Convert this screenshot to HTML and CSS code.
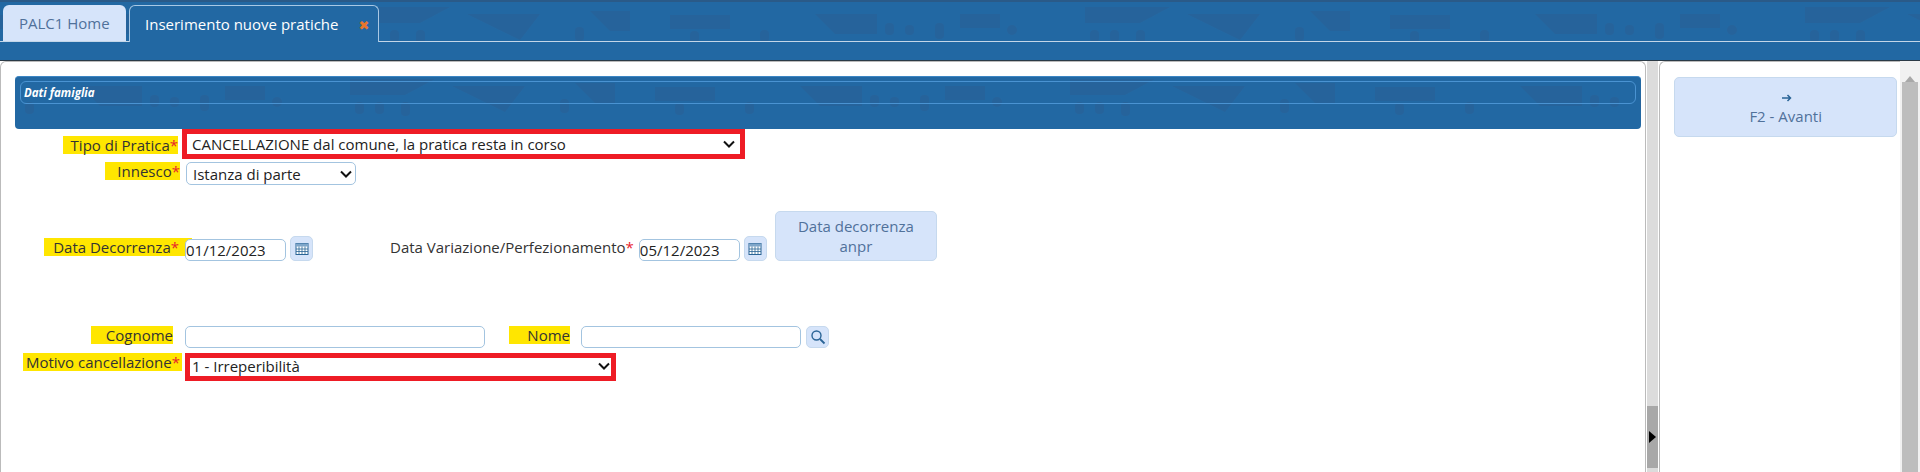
FILE: index.html
```html
<!DOCTYPE html>
<html lang="it">
  <head>
    <meta charset="UTF-8" />
    <title>Inserimento nuove pratiche</title>
    <link rel="stylesheet" href="styles.css">
  </head>
  <body>
    <div class="topbar">
      <ul class="tabs">
        <li class="tab">PALC1 Home</li>
        <li class="tab active">Inserimento nuove pratiche <span class="tab-close">&#10006;</span></li>
      </ul>
    </div>
    <div class="main">
      <div class="panel">
        <div class="fieldset-head">
          <div class="legend">Dati famiglia</div>
        </div>
        <div class="row row-tipo">
          <label class="lbl hl hl-tipo">Tipo di Pratica<em>*</em></label>
          <div class="red-box red-tipo">
            <span>CANCELLAZIONE dal comune, la pratica resta in corso</span>
            <svg class="chev" viewBox="0 0 12 8"><path d="M1 1.5l5 5 5-5" /></svg>
          </div>
        </div>
        <div class="row row-innesco">
          <label class="lbl hl hl-innesco">Innesco<em>*</em></label>
          <div class="select-box">
            <span>Istanza di parte</span>
            <svg class="chev" viewBox="0 0 12 8"><path d="M1 1.5l5 5 5-5" /></svg>
          </div>
        </div>
        <div class="row row-date">
          <label class="lbl hl hl-data">Data Decorrenza<em>*</em></label>
          <input class="inp inp-date inp-first" type="text" value="01/12/2023" />
          <button class="icon-btn cal">
            <svg viewBox="0 0 14 14"><rect x="1" y="1.5" width="12" height="11" fill="#fff" stroke="#2a6496"/><rect x="1" y="1.5" width="12" height="3" fill="#7fa6c9"/><path d="M1 7h12M1 9.5h12M4 4.5v8M7 4.5v8M10 4.5v8" stroke="#2a6496" stroke-width=".8"/></svg>
          </button>
          <label class="lbl lbl-var">Data Variazione/Perfezionamento<em>*</em></label>
          <input class="inp inp-date" type="text" value="05/12/2023" />
          <button class="icon-btn cal">
            <svg viewBox="0 0 14 14"><rect x="1" y="1.5" width="12" height="11" fill="#fff" stroke="#2a6496"/><rect x="1" y="1.5" width="12" height="3" fill="#7fa6c9"/><path d="M1 7h12M1 9.5h12M4 4.5v8M7 4.5v8M10 4.5v8" stroke="#2a6496" stroke-width=".8"/></svg>
          </button>
          <button class="btn-anpr">Data decorrenza anpr</button>
        </div>
        <div class="row row-nome">
          <label class="lbl hl hl-cognome">Cognome</label>
          <input class="inp inp-cognome" type="text" />
          <label class="lbl hl hl-nome">Nome</label>
          <input class="inp inp-nome" type="text" />
          <button class="icon-btn search">
            <svg viewBox="0 0 16 16"><circle cx="6.5" cy="6.5" r="4.5" fill="none" stroke="#2a6496" stroke-width="1.4"/><path d="M10 10l4.5 4.5" stroke="#2a6496" stroke-width="1.8"/></svg>
          </button>
        </div>
        <div class="row row-motivo">
          <label class="lbl hl hl-motivo">Motivo cancellazione<em>*</em></label>
          <div class="red-box red-motivo">
            <span>1 - Irreperibilità</span>
            <svg class="chev" viewBox="0 0 12 8"><path d="M1 1.5l5 5 5-5" /></svg>
          </div>
        </div>
      </div>
      <div class="splitter">
        <div class="splitter-thumb"><i></i></div>
      </div>
      <div class="side">
        <button class="btn-avanti">
          <svg class="arrow" viewBox="0 0 10 8"><path d="M0 4h8.5M5.5 1l3 3-3 3" /></svg>
          <span>F2 - Avanti</span>
        </button>
      </div>
      <div class="scrollbar">
        <div class="scroll-up"></div>
        <div class="scroll-thumb"></div>
      </div>
    </div>
  </body>
</html>
```

FILE: styles.css
```css
* {
  margin: 0;
  padding: 0;
  box-sizing: border-box;
}
html,
body {
  height: 472px;
  overflow: hidden;
}
body {
  font-family: "Open Sans", "Noto Sans", sans-serif;
  font-size: 15px;
  color: #333;
  background-color: #fff;
}
.topbar {
  height: 61px;
  background-color: #2268a3;
  border-top: 2px solid #2a5a88;
  border-bottom: 1px solid #2b3a46;
  padding-top: 3px;
}
/* sfondo con le casette, appena piu scure del blu */
.tabs,
.fieldset-head {
  background-image: url("data:image/svg+xml,%3Csvg xmlns='http://www.w3.org/2000/svg' width='720' height='53'%3E%3Cg fill='%2326639b'%3E%3Cpath d='M65 9h62v20H85zM210 9h40v14h-40zM335 2h85l-30 16h-55zM437 9h73l-20 26zM560 6h40v20h-20zM640 10h60v14h-60z'/%3E%3Crect x='10' y='25' width='9' height='12' rx='4'/%3E%3Crect x='135' y='18' width='9' height='12' rx='4'/%3E%3Crect x='155' y='20' width='9' height='10' rx='4'/%3E%3Crect x='185' y='18' width='9' height='16' rx='4'/%3E%3Ccircle cx='262' cy='25' r='5'/%3E%3Crect x='340' y='25' width='9' height='12' rx='4'/%3E%3Crect x='360' y='25' width='9' height='12' rx='4'/%3E%3Crect x='386' y='25' width='9' height='14' rx='4'/%3E%3Crect x='545' y='22' width='9' height='14' rx='4'/%3E%3Crect x='660' y='26' width='9' height='12' rx='4'/%3E%3C/g%3E%3C/svg%3E");
}
.tabs {
  display: flex;
  height: 37px;
  padding-left: 3px;
  gap: 3px;
  list-style: none;
  border-bottom: 1px solid #c3d6e8;
  background-position: 30px 0;
}
.tab {
  height: 36px;
  padding: 0 16px;
  line-height: 36px;
  color: #50719a;
  background-color: #d6e4fa;
  border-radius: 6px 6px 0 0;
  white-space: nowrap;
}
.tab:first-child {
  width: 123px;
}
.tab.active {
  width: 250px;
  height: 37px;
  color: #fff;
  background-color: #2268a3;
  border: 1px solid #a9c8e4;
  border-bottom: none;
  padding: 0 0 0 15px;
}
.tab-close {
  margin-left: 16px;
  color: #e8762c;
  font-size: 13px;
  font-family: "DejaVu Sans", sans-serif;
}
.main {
  display: flex;
  height: 411px;
}
.panel {
  width: 1647px;
  border: 1px solid #bbb;
  border-bottom: none;
  border-radius: 6px 6px 0 0;
  padding: 14px 4px 0 14px;
}
.fieldset-head {
  width: 1626px;
  height: 53px;
  padding: 4px 5px 5px;
  background-color: #2268a3;
  border-radius: 4px;
  border-top: 1px solid #3c86c4;
}
.legend {
  height: 23px;
  line-height: 21px;
  padding-left: 3px;
  color: #fff;
  font-size: 11.5px;
  font-weight: 700;
  font-style: italic;
  border: 1px solid #4a93d2;
  border-radius: 6px;
}
.row {
  display: flex;
  align-items: flex-start;
}
.row-tipo {
  height: 33px;
}
.row-innesco {
  height: 49px;
}
.row-date {
  height: 115px;
}
.row-nome {
  height: 27px;
}
.lbl {
  line-height: 18px;
  white-space: nowrap;
}
.lbl em {
  color: #e8212d;
  font-style: normal;
}
.hl {
  background-color: #ffe600;
  text-align: right;
}
.hl-tipo {
  width: 115px;
  margin: 7px 0 0 48px;
}
.hl-innesco {
  width: 75px;
  margin: 0 0 0 90px;
}
.hl-data {
  width: 148px;
  margin: 27px 0 0 29px;
  padding-right: 13px;
}
.hl-cognome {
  width: 82px;
  margin: 0 12px 0 76px;
}
.hl-nome {
  width: 61px;
  margin: 0 11px 0 24px;
}
.hl-motivo {
  width: 159px;
  margin: 0 3px 0 8px;
  padding-right: 2px;
}
.red-box {
  display: flex;
  align-items: center;
  justify-content: space-between;
  border: 5px solid #ee1c25;
  background-color: #fff;
  color: #222;
}
.red-tipo {
  width: 563px;
  height: 30px;
  margin-left: 4px;
  padding: 0 5px 0 5px;
}
.red-motivo {
  width: 431px;
  height: 28px;
  padding: 0 1px 2px 2px;
}
.select-box {
  display: flex;
  align-items: center;
  justify-content: space-between;
  width: 170px;
  height: 23px;
  margin-left: 6px;
  padding: 0 3px 0 6px;
  border: 1px solid #a3c4e0;
  border-radius: 5px;
  color: #222;
}
.chev {
  width: 12px;
  height: 8px;
  fill: none;
  stroke: #111;
  stroke-width: 2;
}
.inp {
  height: 22px;
  padding: 0;
  border: 1px solid #a3c4e0;
  border-radius: 5px;
  font: 15px "Open Sans", "Noto Sans", sans-serif;
  color: #222;
  outline: none;
}
.inp-date {
  width: 101px;
  margin-top: 28px;
}
.inp-first {
  margin-left: -7px;
}
.inp-cognome {
  width: 300px;
}
.inp-nome {
  width: 220px;
}
.icon-btn {
  display: flex;
  align-items: center;
  justify-content: center;
  width: 23px;
  background-color: #d6e4fa;
  border: 1px solid #c6d9ee;
  border-radius: 5px;
}
.cal {
  height: 25px;
  margin: 25px 0 0 4px;
}
.cal svg {
  width: 14px;
  height: 14px;
}
.search {
  height: 22px;
  margin-left: 5px;
}
.search svg {
  width: 16px;
  height: 16px;
}
.lbl-var {
  margin: 27px 5px 0 77px;
}
.btn-anpr {
  width: 162px;
  height: 50px;
  margin-left: 8px;
  background-color: #d6e4fa;
  border: 1px solid #c6d9ee;
  border-radius: 5px;
  color: #50719a;
  font: 15px/20px "Open Sans", "Noto Sans", sans-serif;
  padding: 0 20px;
}
.splitter {
  width: 14px;
  padding-top: 345px;
  background-color: #dcdcdc;
  background-clip: padding-box;
  border-left: 1px solid #fff;
  border-right: 1px solid #fff;
}
.splitter-thumb {
  display: flex;
  align-items: center;
  justify-content: center;
  height: 62px;
  background-color: #a8a8a8;
}
.splitter-thumb i {
  border-left: 7px solid #000;
  border-top: 6px solid transparent;
  border-bottom: 6px solid transparent;
}
.side {
  flex: 1;
  padding: 15px 3px 0 14px;
  border-left: 1px solid #bbb;
  border-top: 1px solid #bbb;
  border-top-left-radius: 6px;
}
.btn-avanti {
  display: flex;
  flex-direction: column;
  align-items: center;
  justify-content: center;
  gap: 4px;
  width: 223px;
  height: 60px;
  padding-top: 5px;
  background-color: #d6e4fa;
  border: 1px solid #c6d9ee;
  border-radius: 5px;
  color: #50719a;
  font: 15px "Open Sans", "Noto Sans", sans-serif;
}
.arrow {
  width: 10px;
  height: 8px;
  margin-left: 3px;
  fill: none;
  stroke: #2a6496;
  stroke-width: 1.5;
}
.scrollbar {
  width: 21px;
  background-color: #f1f1f1;
  padding: 0 2px;
}
.scroll-up {
  width: 0;
  height: 21px;
  margin: 0 auto;
  border-left: 5px solid transparent;
  border-right: 5px solid transparent;
  border-bottom: 6px solid #a8a8a8;
  border-top: 8px solid transparent;
}
.scroll-thumb {
  height: 390px;
  background-color: #bdbdbd;
}
```
